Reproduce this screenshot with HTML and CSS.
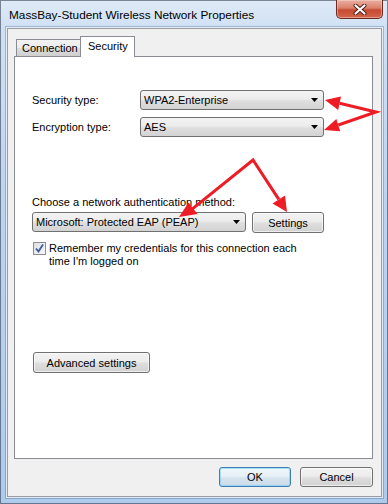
FILE: index.html
```html
<!DOCTYPE html>
<html>
<head>
<meta charset="utf-8">
<link rel="stylesheet" href="styles.css">
</head>
<body>
<div class="window">
  <div class="titlebar">
    <span class="title">MassBay-Student Wireless Network Properties</span>
    <div class="close">
      <svg width="14" height="11" viewBox="0 0 14 11"><path d="M2.5 1.5 L11.5 9.5 M11.5 1.5 L2.5 9.5" stroke="#4a1a12" stroke-width="4" stroke-linecap="round"/><path d="M2.5 1.5 L11.5 9.5 M11.5 1.5 L2.5 9.5" stroke="#fff" stroke-width="2.2" stroke-linecap="round"/></svg>
    </div>
  </div>
  <div class="client">
    <div class="tabs">
      <div class="tab">Connection</div>
      <div class="tab active">Security</div>
    </div>
    <div class="panel">
      <div class="row">
        <span class="label">Security type:</span>
        <div class="combo type">WPA2-Enterprise<svg class="caret" width="7" height="4" viewBox="0 0 7 4"><path d="M0 0H7L3.5 4Z" fill="#000"/></svg></div>
      </div>
      <div class="row second">
        <span class="label">Encryption type:</span>
        <div class="combo type">AES<svg class="caret" width="7" height="4" viewBox="0 0 7 4"><path d="M0 0H7L3.5 4Z" fill="#000"/></svg></div>
      </div>
      <div class="auth-label">Choose a network authentication method:</div>
      <div class="auth-row">
        <div class="combo auth">Microsoft: Protected EAP (PEAP)<svg class="caret" width="7" height="4" viewBox="0 0 7 4"><path d="M0 0H7L3.5 4Z" fill="#000"/></svg></div>
        <div class="btn settings">Settings</div>
      </div>
      <div class="check">
        <span class="box"><svg width="11" height="11" viewBox="0 0 11 11"><path d="M2 5.5 L4.5 8.5 L9 1.5" fill="none" stroke="#3f5a99" stroke-width="1.8"/></svg></span>
        <span class="check-text">Remember my credentials for this connection each<br>time I'm logged on</span>
      </div>
      <div class="btn adv">Advanced settings</div>
    </div>
    <div class="actions">
      <div class="btn ok">OK</div>
      <div class="btn cancel">Cancel</div>
    </div>
  </div>
  <svg class="arrows" width="388" height="504" viewBox="0 0 388 504">
    <g stroke="#ee1c24" stroke-width="3" fill="none" stroke-linejoin="miter">
      <polyline points="339.6,103.3 376,112 338.3,125"/>
      <polyline points="192.7,208.6 253,160 278.8,199.4"/>
    </g>
    <g fill="#ee1c24">
      <polygon points="325,100 341,96.5 338.2,110"/>
      <polygon points="324,130 340.2,131.3 336.4,118.9"/>
      <polygon points="179,217 197.5,214 188.6,202.5"/>
      <polygon points="287,212 285,195.5 272.5,203.5"/>
    </g>
  </svg>
</div>
</body>
</html>
```

FILE: styles.css
```css
html, body {
  margin: 0;
  padding: 0;
  background: #fff;
}

.window {
  position: relative;
  width: 388px;
  height: 504px;
  box-sizing: border-box;
  background: linear-gradient(180deg, #dfeaf7 0px, #cfe0f4 30px, #bcd4f0 200px, #aecbec 504px);
  box-shadow: inset 0 0 0 1px rgba(40, 50, 70, 0.55);
  display: flex;
  flex-direction: column;
  font-family: "Liberation Sans", Arial, sans-serif;
  font-size: 11px;
  color: #000;
}

.titlebar {
  height: 29px;
  display: flex;
  align-items: flex-start;
}

.title {
  margin-left: 9px;
  margin-top: 7px;
  font-size: 11.8px;
  line-height: 16px;
  color: #000;
}

.close {
  margin-left: auto;
  margin-right: 5px;
  width: 47px;
  height: 19px;
  box-sizing: border-box;
  border: 1px solid #6b2a1f;
  border-top: none;
  border-radius: 0 0 5px 5px;
  background: linear-gradient(180deg, #eab0a2 0%, #d9806c 45%, #c84a31 55%, #d2654c 100%);
  box-shadow: inset 0 0 0 1px rgba(255, 220, 210, 0.45);
  display: flex;
  align-items: center;
  justify-content: center;
}

.client {
  margin: 0 6px 7px 7px;
  height: 469px;
  box-sizing: border-box;
  border: 1px solid #9a9ea4;
  background: #f0f0f0;
  padding: 7px 8px 9px 6px;
  display: flex;
  flex-direction: column;
  box-shadow: 0 0 0 1px rgba(255, 255, 255, 0.75), 0 0 0 2px rgba(70, 100, 150, 0.35);
}

.tabs {
  height: 20px;
  display: flex;
  align-items: flex-end;
  padding-left: 2px;
}

.tab {
  box-sizing: border-box;
  height: 17px;
  width: 65px;
  border: 1px solid #898c95;
  border-bottom: none;
  background: linear-gradient(180deg, #f2f2f2 0%, #ebebeb 50%, #dddddd 51%, #cfcfcf 100%);
  padding-left: 5px;
  line-height: 16px;
}

.tab.active {
  position: relative;
  z-index: 1;
  height: 21px;
  width: 55px;
  margin-left: -1px;
  margin-bottom: -1px;
  background: #fff;
  padding-left: 7px;
  line-height: 18px;
}

.panel {
  height: 403px;
  box-sizing: border-box;
  border: 1px solid #898c95;
  background: #fff;
  padding: 33px 0 0 17px;
  display: flex;
  flex-direction: column;
  align-items: flex-start;
}

.row {
  display: flex;
  align-items: center;
  height: 20px;
}

.row.second {
  margin-top: 7px;
}

.label {
  width: 108px;
}

.combo {
  box-sizing: border-box;
  height: 20px;
  border: 1px solid #707070;
  border-radius: 3px;
  background: linear-gradient(180deg, #f3f3f3 0%, #ececec 45%, #dedede 55%, #d3d3d3 100%);
  display: flex;
  align-items: center;
  padding-left: 3px;
  padding-right: 5px;
  line-height: 16px;
}

.combo.type {
  width: 184px;
}

.combo.auth {
  width: 214px;
}

.caret {
  margin-left: auto;
}

.auth-label {
  margin-top: 58px;
  line-height: 15px;
}

.auth-row {
  margin-top: 2px;
  display: flex;
  align-items: flex-start;
  gap: 6px;
}

.btn {
  box-sizing: border-box;
  border: 1px solid #707070;
  border-radius: 3px;
  background: linear-gradient(180deg, #f3f3f3 0%, #ececec 45%, #dedede 55%, #d1d1d1 100%);
  box-shadow: inset 0 0 0 1px rgba(255, 255, 255, 0.6);
  display: flex;
  align-items: center;
  justify-content: center;
  line-height: 16px;
}

.btn.settings {
  width: 72px;
  height: 21px;
}

.check {
  margin-top: 9px;
  margin-left: 1px;
  display: flex;
  align-items: flex-start;
}

.box {
  box-sizing: border-box;
  width: 13px;
  height: 13px;
  border: 1px solid #8e8f8f;
  background: linear-gradient(135deg, #dcdfe4 0%, #f6f6f6 100%);
  display: flex;
  align-items: center;
  justify-content: center;
  flex: none;
}

.check-text {
  margin-left: 3px;
  line-height: 13px;
}

.btn.adv {
  margin-top: 84px;
  margin-left: 1px;
  width: 117px;
  height: 21px;
}

.actions {
  margin-top: 8px;
  display: flex;
  justify-content: flex-end;
  gap: 9px;
}

.btn.ok {
  width: 72px;
  height: 20px;
  border-color: #3c7fb1;
  box-shadow: inset 0 0 0 1px rgba(120, 205, 250, 0.6);
  background: linear-gradient(180deg, #f1f7fb 0%, #e6f0f7 45%, #d6e4ef 55%, #cbdbe8 100%);
}

.btn.cancel {
  width: 73px;
  height: 20px;
}

.arrows {
  position: absolute;
  left: 0;
  top: 0;
  pointer-events: none;
}
```
